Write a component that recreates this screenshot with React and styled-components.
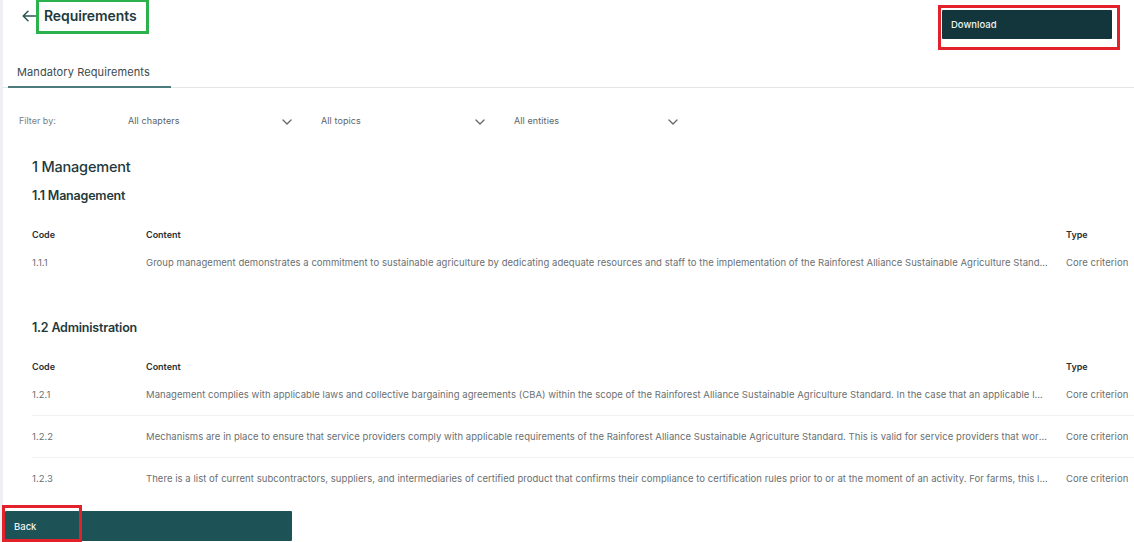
import styled, { createGlobalStyle } from 'styled-components';

const GlobalStyle = createGlobalStyle`
    * { box-sizing: border-box; }
    body {
        margin: 0;
        background: #ffffff;
        font-family: 'Inter', 'Open Sans', sans-serif;
        overflow: hidden;
    }
`;

const sections = [
    {
        title: '1.1 Management',
        rows: [
            { code: '1.1.1', content: 'Group management demonstrates a commitment to sustainable agriculture by dedicating adequate resources and staff to the implementation of the Rainforest Alliance Sustainable Agriculture Standard and its requirements.', type: 'Core criterion' },
        ],
    },
    {
        title: '1.2 Administration',
        rows: [
            { code: '1.2.1', content: 'Management complies with applicable laws and collective bargaining agreements (CBA) within the scope of the Rainforest Alliance Sustainable Agriculture Standard. In the case that an applicable law is more stringent than a requirement of the standard.', type: 'Core criterion' },
            { code: '1.2.2', content: 'Mechanisms are in place to ensure that service providers comply with applicable requirements of the Rainforest Alliance Sustainable Agriculture Standard. This is valid for service providers that work on the farm.', type: 'Core criterion' },
            { code: '1.2.3', content: 'There is a list of current subcontractors, suppliers, and intermediaries of certified product that confirms their compliance to certification rules prior to or at the moment of an activity. For farms, this list of subcontractors is kept.', type: 'Core criterion' },
        ],
    },
];

const filters = ['All chapters', 'All topics', 'All entities'];

function Chevron() {
    return (
        <svg width="10" height="6" viewBox="0 0 10 6" fill="none">
            <path d="M1 1l4 4 4-4" stroke="#666" strokeWidth="1.3" strokeLinecap="round" strokeLinejoin="round" />
        </svg>
    );
}

function App() {
    return (
        <Page>
            <GlobalStyle />
            <Header>
                <TitleWrap>
                    <svg width="14" height="12" viewBox="0 0 14 12" fill="none">
                        <path d="M13.5 6H1.5M6 1.2L1.2 6 6 10.8" stroke="#2b5558" strokeWidth="1.5" strokeLinecap="round" strokeLinejoin="round" />
                    </svg>
                    <Title>Requirements</Title>
                </TitleWrap>
                <DarkButton>
                    Download
                    <Mark color="#e3212b" top="-5px" left="-4px" right="-8px" bottom="-11px" />
                </DarkButton>
            </Header>

            <Tabs>
                <Tab>Mandatory Requirements</Tab>
            </Tabs>

            <FilterRow>
                <FilterLabel>Filter by:</FilterLabel>
                {filters.map(f => (
                    <Select key={f}>
                        <span>{f}</span>
                        <Chevron />
                    </Select>
                ))}
            </FilterRow>

            <Content>
                <ChapterTitle>1 Management</ChapterTitle>
                {sections.map(s => (
                    <Section key={s.title}>
                        <SectionTitle>{s.title}</SectionTitle>
                        <Table>
                            <HeadRow>
                                <Cell>Code</Cell>
                                <Cell>Content</Cell>
                                <Cell>Type</Cell>
                            </HeadRow>
                            {s.rows.map((r, i) => (
                                <Row key={r.code} $last={i === s.rows.length - 1}>
                                    <Cell>{r.code}</Cell>
                                    <Cell $truncate>{r.content}</Cell>
                                    <Cell>{r.type}</Cell>
                                </Row>
                            ))}
                        </Table>
                    </Section>
                ))}
            </Content>

            <Footer>
                <BackButton>
                    Back
                    <Mark color="#e3212b" top="-6px" left="-3px" right="auto" bottom="-1px" width="80px" />
                </BackButton>
            </Footer>
        </Page>
    );
}

export default App;

const Page = styled.div`
    width: 1134px;
    height: 542px;
    border-left: 3px solid #eef0f4;
    display: flex;
    flex-direction: column;
    position: relative;
`;

const Header = styled.div`
    display: flex;
    justify-content: space-between;
    align-items: flex-start;
    height: 58px;
    padding: 0 22px 0 19px;
`;

const TitleWrap = styled.div`
    display: flex;
    align-items: center;
    height: 34px;
    svg {
        margin-top: -2px;
    }
`;

const Title = styled.h1`
    margin: 0;
    height: 34px;
    display: flex;
    align-items: center;
    padding: 0 9px 2px 5px;
    border: 3px solid #2bb24c;
    border-top-width: 2px;
    font-size: 14px;
    font-weight: 600;
    color: #1f3a3d;
    letter-spacing: -0.1px;
`;

const DarkButton = styled.button`
    position: relative;
    margin-top: 10px;
    width: 170px;
    height: 29px;
    border: none;
    border-radius: 1px;
    background: #12363b;
    color: #eef2f2;
    font-family: 'Inter', sans-serif;
    font-size: 9.5px;
    font-weight: 500;
    text-align: left;
    padding: 0 0 0 9px;
`;

const Mark = styled.span`
    position: absolute;
    top: ${p => p.top};
    left: ${p => p.left};
    right: ${p => p.right};
    bottom: ${p => p.bottom};
    width: ${p => p.width || 'auto'};
    border: 3px solid ${p => p.color};
    pointer-events: none;
`;

const Tabs = styled.div`
    display: flex;
    padding-left: 5px;
    border-bottom: 1px solid #e4e6e8;
    height: 30px;
`;

const Tab = styled.div`
    display: flex;
    align-items: flex-end;
    padding: 0 21px 7px 9px;
    margin-bottom: -1px;
    font-size: 11px;
    color: #3b4a4c;
    letter-spacing: 0.1px;
    border-bottom: 2px solid #4c7b7d;
`;

const FilterRow = styled.div`
    display: flex;
    align-items: center;
    height: 64px;
    padding: 0 0 0 16px;
`;

const FilterLabel = styled.span`
    width: 109px;
    font-size: 9px;
    color: #7a8083;
`;

const Select = styled.div`
    width: 193px;
    display: flex;
    align-items: center;
    justify-content: space-between;
    padding-right: 29px;
    font-size: 9px;
    color: #5c6467;
    letter-spacing: 0.1px;
    svg {
        margin-top: 3px;
    }
`;

const Content = styled.div`
    padding: 3px 0 0 29px;
    flex: 1;
`;

const ChapterTitle = styled.h2`
    margin: 0;
    height: 23px;
    line-height: 23px;
    font-size: 14.5px;
    font-weight: 500;
    color: #1f3a3d;
    letter-spacing: -0.2px;
`;

const Section = styled.div`
    &:last-child {
        margin-top: 26px;
    }
`;

const SectionTitle = styled.h3`
    margin: 0;
    height: 35px;
    display: flex;
    align-items: center;
    font-size: 12.5px;
    font-weight: 600;
    color: #1f3a3d;
    letter-spacing: -0.2px;
`;

const Table = styled.div`
    margin-top: 13px;
    width: 1110px;
`;

const HeadRow = styled.div`
    display: grid;
    grid-template-columns: 114px 920px 1fr;
    height: 16px;
    align-items: center;
    font-size: 9px;
    font-weight: 600;
    color: #2a2f31;
`;

const Row = styled.div`
    display: grid;
    grid-template-columns: 114px 920px 1fr;
    height: 42px;
    align-items: center;
    font-size: 9.5px;
    letter-spacing: 0.05px;
    color: #6a6f72;
    border-bottom: 1px solid ${p => (p.$last ? 'transparent' : '#f0f1f2')};
`;

const Cell = styled.div`
    white-space: nowrap;
    overflow: ${p => (p.$truncate ? 'hidden' : 'visible')};
    text-overflow: ellipsis;
    padding-right: ${p => (p.$truncate ? '18px' : '0')};
`;

const Footer = styled.div`
    padding: 0 0 1px 2px;
`;

const BackButton = styled.button`
    position: relative;
    width: 287px;
    height: 30px;
    border: none;
    border-radius: 1px;
    background: #1d5256;
    color: #eef2f2;
    font-family: 'Inter', sans-serif;
    font-size: 9.5px;
    font-weight: 500;
    text-align: left;
    padding: 0 0 0 9px;
`;
